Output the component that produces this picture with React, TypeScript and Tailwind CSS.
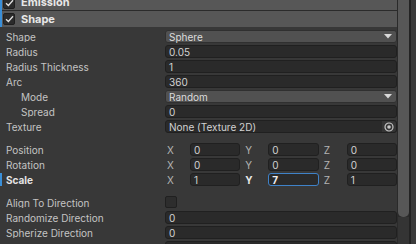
import { ReactNode } from "react";

function Check() {
  return (
    <div className="flex h-[12px] w-[12px] items-center justify-center rounded-[2px] border border-[#1f1f1f] bg-[#2b2b2b]">
      <svg width="9" height="8" viewBox="0 0 9 8" fill="none">
        <path d="M1 4.2 L3.4 6.5 L8 1.2" stroke="#e0e0e0" strokeWidth="1.3" />
      </svg>
    </div>
  );
}

function ModuleHeader({ title, className = "" }: { title: string; className?: string }) {
  return (
    <div className={`flex h-[16px] items-center gap-[6px] bg-[#575757] pl-[1px] ${className}`}>
      <Check />
      <span className="text-[11px] font-bold text-[#e8e8e8]">{title}</span>
    </div>
  );
}

function Row({
  label,
  indent,
  bold,
  marked,
  children,
}: {
  label: string;
  indent?: boolean;
  bold?: boolean;
  marked?: boolean;
  children: ReactNode;
}) {
  return (
    <div className="flex h-[15px] items-center">
      <div className={`my-px w-[2px] self-stretch ${marked ? "bg-[#3a8fd8]" : ""}`} />
      <div
        className={`w-[163px] truncate ${indent ? "pl-[19px]" : "pl-[4px]"} ${
          bold ? "font-bold text-[#e4e4e4]" : "text-[#c4c4c4]"
        }`}
      >
        {label}
      </div>
      <div className="flex h-[13px] flex-1">{children}</div>
    </div>
  );
}

function Field({ value, focused }: { value: string; focused?: boolean }) {
  return (
    <div
      className={`flex h-full flex-1 items-center rounded-[3px] border bg-[#2a2a2a] pl-[3px] ${
        focused ? "border-[#3f82c8] font-bold text-[#f0f0f0]" : "border-[#202020] text-[#d2d2d2]"
      }`}
    >
      {value}
    </div>
  );
}

function Popup({ value }: { value: string }) {
  return (
    <div className="flex h-full flex-1 items-center justify-between rounded-[3px] border border-[#303030] bg-[#515151] pl-[3px] pr-[4px] text-[#dcdcdc]">
      <span>{value}</span>
      <svg width="8" height="5" viewBox="0 0 8 5">
        <path d="M0 0 H8 L4 4.5 Z" fill="#d8d8d8" />
      </svg>
    </div>
  );
}

function ObjectField({ value }: { value: string }) {
  return (
    <div className="flex h-full flex-1 items-center rounded-[3px] border border-[#202020] bg-[#2a2a2a] text-[#d2d2d2]">
      <span className="flex-1 pl-[3px]">{value}</span>
      <div className="flex h-full w-[14px] items-center justify-center rounded-r-[3px] bg-[#353535]">
        <svg width="10" height="10" viewBox="0 0 10 10">
          <circle cx="5" cy="5" r="4" fill="none" stroke="#c8c8c8" strokeWidth="1.2" />
          <circle cx="5" cy="5" r="1.8" fill="#c8c8c8" />
        </svg>
      </div>
    </div>
  );
}

function Vector({ values, focus }: { values: string[]; focus?: number }) {
  return (
    <div className="grid h-full flex-1 grid-cols-3 gap-[3px]">
      {["X", "Y", "Z"].map((axis, i) => (
        <div key={axis} className="flex h-full">
          <span
            className={`flex w-[25px] items-center pl-[2px] ${
              focus === i ? "font-bold text-[#e8e8e8]" : "text-[#b4b4b4]"
            }`}
          >
            {axis}
          </span>
          <Field value={values[i]} focused={focus === i} />
        </div>
      ))}
    </div>
  );
}

export default function App() {
  return (
    <div className="flex h-[244px] w-[416px] overflow-hidden bg-[#383838] font-[Inter,'Noto_Sans',sans-serif] text-[10px] leading-none">
      <div className="flex w-[397px] flex-col">
        <div className="-mt-[5px] border-l-2 border-[#3a8fd8]">
          <ModuleHeader title="Emission" className="border-b border-[#2b2b2b]" />
          <ModuleHeader title="Shape" />
        </div>
        <div className="h-[1px] bg-[#2e2e2e]" />
        <div className="flex flex-col pt-[2px]">
          <Row label="Shape">
            <Popup value="Sphere" />
          </Row>
          <Row label="Radius">
            <Field value="0.05" />
          </Row>
          <Row label="Radius Thickness">
            <Field value="1" />
          </Row>
          <Row label="Arc">
            <Field value="360" />
          </Row>
          <Row label="Mode" indent>
            <Popup value="Random" />
          </Row>
          <Row label="Spread" indent>
            <Field value="0" />
          </Row>
          <Row label="Texture">
            <ObjectField value="None (Texture 2D)" />
          </Row>
          <div className="h-[8px]" />
          <Row label="Position">
            <Vector values={["0", "0", "0"]} />
          </Row>
          <Row label="Rotation">
            <Vector values={["0", "0", "0"]} />
          </Row>
          <Row label="Scale" bold marked>
            <Vector values={["1", "7", "1"]} focus={1} />
          </Row>
          <div className="h-[8px]" />
          <Row label="Align To Direction">
            <div className="h-[12px] w-[12px] rounded-[2px] border border-[#202020] bg-[#2d2d2d]" />
          </Row>
          <Row label="Randomize Direction">
            <Field value="0" />
          </Row>
          <Row label="Spherize Direction">
            <Field value="0" />
          </Row>
          <Row label="">
            <Field value="" />
          </Row>
        </div>
      </div>
      <div className="flex w-[12px] flex-col bg-[#2a2a2a] pl-[1px]">
        <div className="h-[217px] rounded-b-[5px] bg-[#575757]" />
        <div className="flex-1 bg-[#343434]" />
      </div>
      <div className="w-[2px] bg-[#232323]" />
      <div className="w-[5px] bg-[#3b3b3b]" />
    </div>
  );
}
